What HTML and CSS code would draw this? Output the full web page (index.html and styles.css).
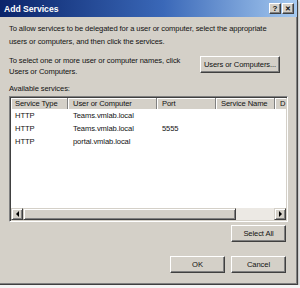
FILE: index.html
```html
<!DOCTYPE html>
<html lang="en">
<head>
    <meta charset="UTF-8">
    <title>Add Services</title>
    <link rel="stylesheet" href="styles.css">
</head>
<body>
    <div class="dialog">
        <div class="titlebar">
            <span class="title">Add Services</span>
            <div class="title-buttons">
                <span class="title-btn">?</span>
                <span class="title-btn close">&#x2715;</span>
            </div>
        </div>

        <div class="content">
            <p class="intro">To allow services to be delegated for a user or computer, select the appropriate<br>users or computers, and then click the services.</p>

            <div class="select-row">
                <p class="select-text">To select one or more user or computer names, click<br>Users or Computers.</p>
                <button class="btn users-btn">Users or Computers...</button>
            </div>

            <div class="label">Available services:</div>

            <div class="listview">
                <div class="lv-header">
                    <div class="col c1">Service Type</div>
                    <div class="col c2">User or Computer</div>
                    <div class="col c3">Port</div>
                    <div class="col c4">Service Name</div>
                    <div class="col c5">D</div>
                </div>
                <div class="lv-body">
                    <div class="lv-row">
                        <div class="cell c1">HTTP</div>
                        <div class="cell c2">Teams.vmlab.local</div>
                        <div class="cell c3"></div>
                    </div>
                    <div class="lv-row">
                        <div class="cell c1">HTTP</div>
                        <div class="cell c2">Teams.vmlab.local</div>
                        <div class="cell c3">5555</div>
                    </div>
                    <div class="lv-row">
                        <div class="cell c1">HTTP</div>
                        <div class="cell c2">portal.vmlab.local</div>
                        <div class="cell c3"></div>
                    </div>
                </div>
                <div class="hscroll">
                    <span class="sb-btn"><span class="arrow left"></span></span>
                    <span class="sb-thumb"></span>
                    <span class="sb-track"></span>
                    <span class="sb-btn"><span class="arrow right"></span></span>
                </div>
            </div>

            <div class="btn-row">
                <button class="btn">Select All</button>
            </div>

            <div class="btn-row footer">
                <button class="btn">OK</button>
                <button class="btn">Cancel</button>
            </div>
        </div>
    </div>
</body>
</html>
```

FILE: styles.css
```css
* {
    margin: 0;
    padding: 0;
    box-sizing: border-box;
}

body {
    background: #f4f4f4;
    font-family: 'Liberation Sans', Arial, sans-serif;
    font-size: 7.6px;
    letter-spacing: -0.1px;
    color: #111;
}

.dialog {
    width: 298px;
    height: 285px;
    background: #d4d0c8;
    border-right: 1px solid #404040;
    border-bottom: 1px solid #404040;
    box-shadow: inset -1px -1px #808080, 1px 1px 2px rgba(0, 0, 0, 0.25);
}

.titlebar {
    height: 17px;
    display: flex;
    align-items: center;
    justify-content: space-between;
    padding: 0 3px 0 4px;
    background: linear-gradient(90deg, #0a246a 0%, #3a68b8 55%, #a6caf0 100%);
}

.title {
    color: #fff;
    font-weight: bold;
    font-size: 8.6px;
    letter-spacing: 0;
}

.title-buttons {
    display: flex;
    gap: 1px;
}

.title-btn {
    width: 12px;
    height: 11px;
    display: flex;
    align-items: center;
    justify-content: center;
    background: #d4d0c8;
    border: 1px solid;
    border-color: #fff #404040 #404040 #fff;
    box-shadow: inset -1px -1px #808080;
    font-weight: bold;
    font-size: 8px;
    line-height: 1;
}

.title-btn.close {
    font-size: 7px;
}

.content {
    padding: 6px 0 0 9px;
}

.intro {
    white-space: nowrap;
    line-height: 12.5px;
}

.select-row {
    display: flex;
    align-items: flex-start;
    margin-top: 7px;
}

.select-text {
    width: 191px;
    white-space: nowrap;
    line-height: 11px;
}

.label {
    margin-top: 6px;
    line-height: 12px;
}

.listview {
    width: 279px;
    height: 126px;
    margin-top: 1px;
    background: #fff;
    border: 1px solid;
    border-color: #808080 #fff #fff #808080;
    box-shadow: inset 1px 1px #404040, inset -1px -1px #d4d0c8;
    padding: 1px;
    display: flex;
    flex-direction: column;
}

.lv-header {
    display: flex;
    height: 11px;
    flex-shrink: 0;
    overflow: hidden;
}

.col {
    background: #d4d0c8;
    border-right: 1px solid #808080;
    box-shadow: inset 1px 1px #fff;
    padding-left: 5px;
    line-height: 11px;
    white-space: nowrap;
    overflow: hidden;
}

.c1 { width: 57px; padding-left: 4px; }
.c2 { width: 89px; }
.c3 { width: 59px; }
.c4 { width: 59px; }
.c5 { width: 11px; border-right: none; }

.lv-body {
    flex: 1;
}

.lv-row {
    display: flex;
    height: 13px;
    align-items: center;
}

.cell {
    white-space: nowrap;
    padding-left: 5px;
}

.cell.c1 {
    padding-left: 4px;
}

.hscroll {
    display: flex;
    height: 12px;
    flex-shrink: 0;
}

.sb-btn,
.sb-thumb {
    background: #d4d0c8;
    border: 1px solid;
    border-color: #d4d0c8 #404040 #404040 #d4d0c8;
    box-shadow: inset 1px 1px #fff, inset -1px -1px #808080;
}

.sb-btn {
    width: 12px;
    display: flex;
    align-items: center;
    justify-content: center;
}

.sb-thumb {
    width: 213px;
}

.sb-track {
    flex: 1;
    background: #ece9e4;
}

.arrow {
    width: 0;
    height: 0;
    border-top: 3px solid transparent;
    border-bottom: 3px solid transparent;
}

.arrow.left {
    border-right: 3px solid #000;
}

.arrow.right {
    border-left: 3px solid #000;
}

.btn-row {
    display: flex;
    justify-content: flex-end;
    gap: 6px;
    width: 277px;
    margin-top: 3px;
}

.btn-row.footer {
    margin-top: 14px;
}

.btn {
    width: 55px;
    height: 17px;
    background: #d4d0c8;
    border: 1px solid;
    border-color: #fff #404040 #404040 #fff;
    box-shadow: inset -1px -1px #808080;
    font-family: 'Liberation Sans', Arial, sans-serif;
    font-size: 7.6px;
    letter-spacing: -0.1px;
    color: #111;
    white-space: nowrap;
}

.users-btn {
    width: 80px;
    margin-top: 1px;
}
```
